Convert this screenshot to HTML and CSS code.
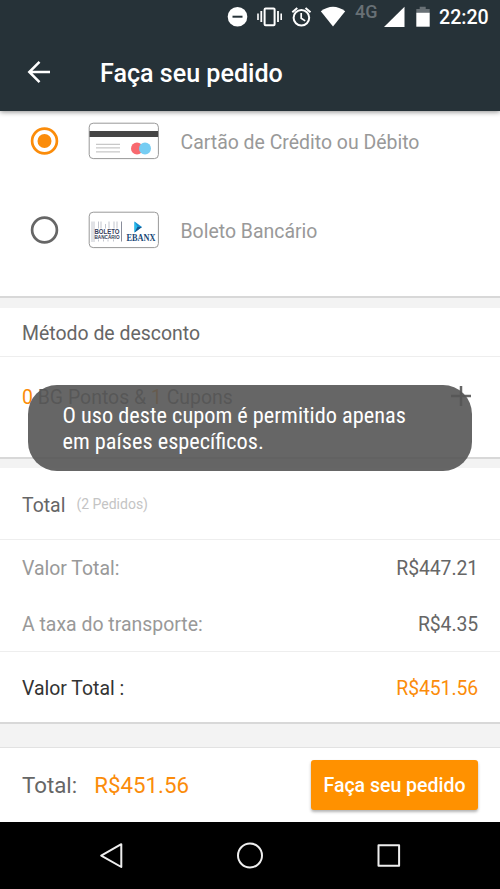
FILE: index.html
```html
<!DOCTYPE html>
<html lang="pt-BR">
<head>
<meta charset="utf-8">
<title>Faça seu pedido</title>
<link rel="stylesheet" href="styles.css">
</head>
<body>
<div class="screen">
  <header class="top">
    <div class="status">
      <svg class="status-icons" width="214" height="34" viewBox="220 0 214 34">
        <circle cx="237.5" cy="16.7" r="9.8" fill="#fff"/>
        <path d="M232.5 16.7h10" stroke="#263238" stroke-width="2"/>
        <g fill="none" stroke="#fff" stroke-width="2">
          <rect x="264.6" y="8.4" width="10" height="16.8" rx="1"/>
          <path d="M261.3 11v11M278 11v11" stroke-width="1.8"/>
          <path d="M258 13.5v6.5M281.2 13.5v6.5" stroke-width="1.6"/>
          <circle cx="301.4" cy="17.8" r="7.8"/>
          <path d="M301.2 13v5.2l4 2.7" stroke-width="1.7"/>
          <path d="M292.3 12.2l5-4.3M310.5 12.2l-5-4.3"/>
        </g>
        <path d="M320.8 11.2Q333 2.2 345.2 11.2L333 26.6z" fill="#fff"/>
        <path d="M404.5 6.7V27H384z" fill="#fff"/>
        <path d="M416.3 12.7V8.9h3.4V6.7h6v2.2h4v3.8z" fill="#687075"/>
        <path d="M416.3 12.7h13.4v14h-13.4z" fill="#fff"/>
      </svg>
      <span class="network">4G</span>
      <span class="clock">22:20</span>
    </div>
    <div class="appbar">
      <svg class="back" width="24" height="24" viewBox="0 0 24 24" fill="none" stroke="#fff" stroke-width="2.5"><path d="M23 12H2.5M12.5 1.8L2.3 12l10.2 10.2"/></svg>
      <h1>Faça seu pedido</h1>
    </div>
  </header>
  <main>
    <section class="card payment">
      <div class="option">
        <svg width="30" height="30" viewBox="0 0 30 30"><circle cx="15.5" cy="15" r="12.4" fill="none" stroke="#fb8c0a" stroke-width="2.7"/><circle cx="15.5" cy="15" r="7" fill="#fb8c0a"/></svg>
        <svg class="brand" width="72" height="38" viewBox="0 0 72 38">
          <rect x="1.2" y="1.2" width="69.2" height="35.4" rx="4" fill="#fff" stroke="#999"/>
          <path d="M1.5 9h68.6v6H1.5z" fill="#454545"/>
          <path d="M8 22.3h24M8 25.9h24M8 29.9h24" stroke="#bbb"/>
          <circle cx="49" cy="26.4" r="6" fill="#f8696f"/><circle cx="57" cy="26.4" r="6" fill="#76cdf3"/>
        </svg>
        <span class="label">Cartão de Crédito ou Débito</span>
      </div>
      <div class="option">
        <svg width="30" height="30" viewBox="0 0 30 30"><circle cx="15.5" cy="15" r="12.4" fill="none" stroke="#666" stroke-width="2.7"/></svg>
        <svg class="brand" width="72" height="38" viewBox="0 0 72 38">
          <rect x="1.2" y="1.2" width="69.2" height="35.4" rx="4" fill="#fff" stroke="#999"/>
          <path d="M4 10.5v20.5M6 10.5v20.5M10.5 10.5v7M13 10.5v7M17.5 13v4.5M21 10.5v7M26 10.5v7M29 10.5v7M10.5 28.5v2M15.5 28.5v2M20 28.5v2M25.5 28.5v2" stroke="#b4b8c2" stroke-width=".8"/>
          <path d="M33.5 10.5v20" stroke="#7c8090" stroke-width=".9"/>
          <text x="6.5" y="23.2" class="boleto" textLength="25" lengthAdjust="spacingAndGlyphs">BOLETO</text>
          <text x="6.5" y="28" class="bancario" textLength="25" lengthAdjust="spacingAndGlyphs">BANCÁRIO</text>
          <path d="M46.5 10.5l7.5 5.500-7.500 5.500z" fill="#168fd1"/><path d="M46.500 10.500l3 5.500-3 5.500z" fill="#26bdeb"/><path d="M54 16l-7.500 5.500 3-5.500z" fill="#17578f"/>
          <text x="38.500" y="30" class="ebanx" textLength="29" lengthAdjust="spacingAndGlyphs">EBANX</text>
        </svg>
        <span class="label">Boleto Bancário</span>
      </div>
    </section>
    <section class="card discount">
      <h2>Método de desconto</h2>
      <div class="coupon">
        <span class="points"><b>0</b> BG Pontos &amp; <b>1</b> Cupons</span>
        <svg width="20" height="20" viewBox="0 0 20 20"><path d="M0 10h20M10 0v20" stroke="#666" stroke-width="2.5"/></svg>
      </div>
    </section>
    <section class="card totals">
      <h2><span>Total</span><small>(2 Pedidos)</small></h2>
      <div class="lines">
        <div class="line"><span>Valor Total:</span><span class="price">R$447.21</span></div>
        <div class="line"><span>A taxa do transporte:</span><span class="price">R$4.35</span></div>
      </div>
      <div class="line grand"><span>Valor Total :</span><span class="price">R$451.56</span></div>
    </section>
  </main>
  <footer class="checkout">
    <span class="sum">Total:</span><span class="amount">R$451.56</span>
    <button>Faça seu pedido</button>
  </footer>
  <nav>
    <svg width="500" height="67" viewBox="0 0 500 67" fill="none" stroke="#eee" stroke-width="2" stroke-linejoin="round">
      <path d="M121.3 22.2v22.8L101.2 33.6z"/><circle cx="250" cy="33.5" r="12"/><rect x="378.5" y="23.2" width="20.6" height="20.6"/>
    </svg>
  </nav>
  <div class="toast" role="status"><span>O uso deste cupom é permitido apenas</span><span>em países específicos.</span></div>
</div>
</body>
</html>
```
FILE: styles.css
```css
* { box-sizing: border-box; }
body { margin: 0; font-family: Roboto, sans-serif; font-size: 19.45px; line-height: 24px; color: #666; }
.screen { position: relative; width: 500px; height: 889px; overflow: hidden; display: flex; flex-direction: column; background: #f3f3f3; }
h1, h2 { margin: 0; font-weight: 400; }
span, small { white-space: nowrap; }
svg { display: block; flex: none; }

.top { position: relative; height: 111px; flex: none; background: #263238; color: #fff; box-shadow: 0 1px 5px rgba(0,0,0,.45); }
.status { position: relative; height: 35px; display: flex; padding-left: 220px; }
.network { position: absolute; left: 355px; top: 0; font-size: 18px; font-weight: 500; color: #687075; }
.clock { margin-left: 5px; margin-top: 6px; font-size: 19.6px; font-weight: 500; }
.appbar { height: 76px; display: flex; align-items: center; padding-left: 27px; }
.back { margin-top: -2px; }
h1 { margin-left: 49px; margin-top: 1px; font-size: 25.1px; font-weight: 500; line-height: 30px; }

main { flex: none; height: 636px; }
.card { background: #fff; border-bottom: 2px solid #d8d8d8; }
.payment { height: 187px; padding: 15px 0 0 29px; }
.option { height: 30px; margin-bottom: 59px; display: flex; align-items: center; color: #999; }
.brand { margin-left: 28.5px; }
.label { margin-left: 21px; margin-top: 4px; }
.boleto { font: 700 6.3px "Liberation Sans", sans-serif; fill: #343b59; }
.bancario { font: 700 4.5px "Liberation Sans", sans-serif; fill: #343b59; }
.ebanx { font: 700 9.5px "Liberation Serif", serif; fill: #174776; }
.discount { height: 151px; margin-top: 10px; }
h2 { font-size: inherit; border-bottom: 1px solid #eee; }
.discount h2 { height: 49px; padding: 14px 22px 0; }
.coupon { display: flex; justify-content: space-between; padding: 29px 29px 0 22px; }
.coupon b { font-weight: 400; color: #fb8c0a; }
.totals { height: 256px; margin-top: 9px; }
.totals h2 { display: flex; height: 72px; padding: 26px 22px 0; }
small { margin-left: 11px; margin-top: -2px; font-size: 14px; color: #c4c4c4; }
.lines { height: 112px; padding-top: 17px; border-bottom: 1px solid #eee; }
.line { display: flex; justify-content: space-between; padding: 0 22px; height: 56px; color: #999; }
.price { color: #666; font-size: 19.4px; letter-spacing: -.1px; }
.grand { padding-top: 25px; color: #333; }
.grand .price { color: #fb8c0a; }

.checkout { flex: none; height: 75px; display: flex; align-items: center; padding: 0 22px; background: #fff; border-top: 1px solid #e2e2e2; font-size: 22.3px; }
.amount { margin-left: 17px; color: #fb8c0a; }
button { margin-left: auto; width: 167px; height: 50px; padding: 2px 0 0; border: 0; border-radius: 3px; background: #ff9100; color: #fff; font: 500 19.5px/24px Roboto, sans-serif; box-shadow: 0 2px 3px rgba(0,0,0,.3); }
nav { flex: none; height: 67px; background: #000; }

.toast { position: absolute; left: 28px; top: 384.5px; width: 444px; height: 86px; padding: 17px 34.5px; border-radius: 29px; background: rgba(85,85,85,.9); color: #fff; font: 400 22.3px/26px "Roboto Condensed", Roboto, sans-serif; font-stretch: 75%; }
.toast span { display: block; width: max-content; }
```
